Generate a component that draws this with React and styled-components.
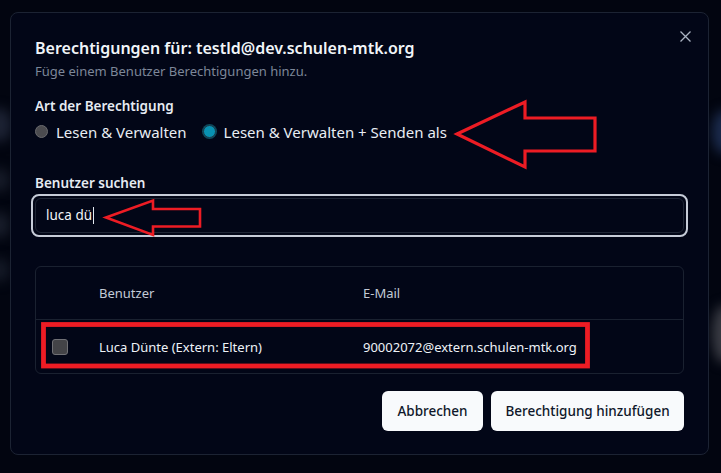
import React from 'react';
import styled, { createGlobalStyle } from 'styled-components';

const GlobalStyle = createGlobalStyle`
  html, body {
    margin: 0;
    padding: 0;
    background: #020510;
    font-family: "Noto Sans", "Open Sans", sans-serif;
  }
`;

const Page = styled.div`
  position: relative;
  width: 721px;
  height: 473px;
  overflow: hidden;
  background: #020510;
  padding: 12px 0 0 10px;
  box-sizing: border-box;
`;

const Blur = styled.div`
  position: absolute;
  border-radius: 50%;
  filter: blur(6px);
  background: ${(p) => p.color};
`;

const Dialog = styled.div`
  position: relative;
  width: 699px;
  height: 443px;
  box-sizing: border-box;
  background: #020617;
  border: 1px solid #1c2333;
  border-radius: 8px;
  padding: 23px 24px 23px 24px;
  display: flex;
  flex-direction: column;
`;

const Close = styled.button`
  position: absolute;
  top: 17px;
  right: 16px;
  background: none;
  border: none;
  padding: 0;
  color: #aab3c2;
  display: flex;
`;

const Title = styled.h2`
  margin: 0;
  font-size: 16px;
  font-weight: 600;
  color: #f1f5f9;
  line-height: 24px;
`;

const Sub = styled.p`
  margin: 1px 0 0 0;
  font-size: 13px;
  color: #7d8799;
  line-height: 20px;
`;

const Label = styled.div`
  font-size: 13.5px;
  font-weight: 600;
  color: #e6ebf2;
  line-height: 20px;
  margin-top: ${(p) => p.top}px;
`;

const RadioRow = styled.div`
  display: flex;
  align-items: center;
  gap: 16px;
  margin-top: 4px;
  height: 24px;
`;

const RadioItem = styled.label`
  display: flex;
  align-items: center;
  gap: 8px;
  font-size: 15px;
  color: #e8edf3;
`;

const Dot = styled.span`
  width: 13px;
  height: 13px;
  border-radius: 50%;
  box-sizing: border-box;
  background: ${(p) => (p.on ? '#0891b2' : '#4b4b4f')};
  border: 1px solid ${(p) => (p.on ? '#1e3a48' : '#6a6a6e')};
  box-shadow: ${(p) => (p.on ? '0 0 0 1px #0c4a5e' : 'none')};
`;

const Input = styled.div`
  margin-top: 1px;
  height: 44px;
  box-sizing: border-box;
  border: 2px solid #c6ccd8;
  border-radius: 8px;
  padding: 2px;
  margin-left: -4px;
  margin-right: -4px;
`;

const InputInner = styled.div`
  height: 100%;
  box-sizing: border-box;
  border: 1px solid #1e2535;
  border-radius: 6px;
  display: flex;
  align-items: center;
  padding-left: 10px;
  font-size: 13.5px;
  color: #f1f5f9;
`;

const Caret = styled.span`
  display: inline-block;
  width: 1px;
  height: 17px;
  background: #e2e8f0;
  margin-left: 1px;
`;

const Table = styled.div`
  margin-top: 29px;
  border: 1px solid #1a2130;
  border-radius: 6px;
`;

const Row = styled.div`
  display: grid;
  grid-template-columns: 63px 264px 1fr;
  align-items: center;
  height: ${(p) => p.h}px;
  border-top: ${(p) => (p.first ? 'none' : '1px solid #1a2130')};
  font-size: 13px;
  color: ${(p) => (p.head ? '#c3cad6' : '#eef2f7')};
`;

const Check = styled.span`
  width: 16px;
  height: 16px;
  box-sizing: border-box;
  margin-left: 16px;
  border-radius: 3px;
  background: #434347;
  border: 1px solid #707075;
`;

const Actions = styled.div`
  display: flex;
  justify-content: flex-end;
  gap: 8px;
  margin-top: 17px;
`;

const Btn = styled.button`
  height: 40px;
  width: ${(p) => p.w}px;
  padding: 0;
  background: #f8fafc;
  color: #0f172a;
  border: none;
  border-radius: 6px;
  font-family: inherit;
  font-size: 13.5px;
  font-weight: 500;
`;

const Overlay = styled.svg`
  position: absolute;
  left: 0;
  top: 0;
  pointer-events: none;
`;

export default function App() {
  return (
    <Page>
      <GlobalStyle />
      <Blur color="#1c2233" style={{ left: -14, top: 108, width: 26, height: 34 }} />
      <Blur color="#161b28" style={{ left: -12, top: 168, width: 22, height: 24 }} />
      <Blur color="#181d2a" style={{ left: -12, top: 212, width: 22, height: 26 }} />
      <Blur color="#141926" style={{ left: -12, top: 258, width: 22, height: 24 }} />
      <Blur color="#1b2b4d" style={{ left: 712, top: 110, width: 24, height: 44 }} />
      <Blur color="#3a3c44" style={{ left: 712, top: 305, width: 24, height: 58 }} />
      <Dialog>
        <Close>
          <svg width="13" height="13" viewBox="0 0 13 13">
            <path d="M1.5 1.5 L11.5 11.5 M11.5 1.5 L1.5 11.5" stroke="currentColor" strokeWidth="1.3" />
          </svg>
        </Close>
        <Title>Berechtigungen für: testld@dev.schulen-mtk.org</Title>
        <Sub>Füge einem Benutzer Berechtigungen hinzu.</Sub>
        <Label top={15}>Art der Berechtigung</Label>
        <RadioRow>
          <RadioItem><Dot />Lesen &amp; Verwalten</RadioItem>
          <RadioItem><Dot on />Lesen &amp; Verwalten + Senden als</RadioItem>
        </RadioRow>
        <Label top={29}>Benutzer suchen</Label>
        <Input>
          <InputInner>luca dü<Caret /></InputInner>
        </Input>
        <Table>
          <Row head first h={52}>
            <span />
            <span>Benutzer</span>
            <span>E-Mail</span>
          </Row>
          <Row h={53}>
            <Check />
            <span>Luca Dünte (Extern: Eltern)</span>
            <span>90002072@extern.schulen-mtk.org</span>
          </Row>
        </Table>
        <Actions>
          <Btn w={101}>Abbrechen</Btn>
          <Btn w={193}>Berechtigung hinzufügen</Btn>
        </Actions>
      </Dialog>
      <Overlay width="721" height="473" viewBox="0 0 721 473">
        <g fill="none" stroke="#ed1c24" strokeLinejoin="miter">
          <polygon
            points="457,134 525,102 525,118 595,118 595,151 525,151 525,167"
            strokeWidth="3.2"
          />
          <polygon
            points="106,217.5 153,200.5 153,209 200,209 200,226.5 153,226.5 153,235"
            strokeWidth="2.6"
          />
          <rect x="43.5" y="324.5" width="544" height="41.5" strokeWidth="4.8" />
        </g>
      </Overlay>
    </Page>
  );
}
